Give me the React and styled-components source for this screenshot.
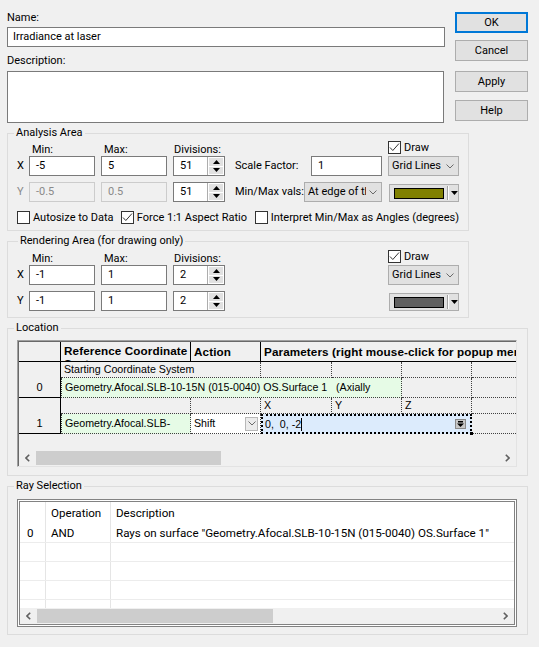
import React from "react";
import styled, { createGlobalStyle } from "styled-components";

const UI_FONT = `Roboto, "Open Sans", sans-serif`;
const GRID_FONT = `"Liberation Sans", Arial, sans-serif`;

const GlobalStyle = createGlobalStyle`
    html, body {
        margin: 0;
        padding: 0;
        background: #f0f0f0;
    }

    * {
        box-sizing: border-box;
    }
`;

const Dialog = styled.div`
    width: 539px;
    height: 647px;
    overflow: hidden;
    background: #f0f0f0;
    font-family: ${UI_FONT};
    font-size: 11px;
    line-height: 14px;
    color: #000;
    padding: 0 11px 0 7px;
`;

const TopSection = styled.div`
    display: flex;
    gap: 10px;
`;

const FormColumn = styled.div`
    width: 438px;
    display: flex;
    flex-direction: column;
`;

const FieldLabel = styled.div`
    height: 14px;
    margin-top: ${(p) => p.$mt}px;
`;

const NameBox = styled.div`
    margin-top: 2px;
    height: 20px;
    border: 1px solid #7a7a7a;
    background: #fff;
    padding: 0 5px;
    display: flex;
    align-items: center;
`;

const DescBox = styled.div`
    margin-top: 3px;
    width: 437px;
    height: 52px;
    border: 1px solid #7a7a7a;
    background: #fff;
`;

const ButtonColumn = styled.div`
    width: 73px;
    display: flex;
    flex-direction: column;
`;

const DialogButton = styled.div`
    margin-top: ${(p) => p.$mt}px;
    height: 21px;
    background: #e1e1e1;
    border: ${(p) => (p.$primary ? "2px solid #0078d7" : "1px solid #adadad")};
    display: flex;
    align-items: center;
    justify-content: center;
`;

const GroupBox = styled.div`
    position: relative;
    width: ${(p) => p.$w}px;
    margin-top: ${(p) => p.$mt}px;
    padding: ${(p) => p.$pad};
    border: 1px solid #dcdcdc;
`;

const GroupTitle = styled.div`
    position: absolute;
    top: -8px;
    left: ${(p) => p.$left}px;
    padding: 0 2px;
    line-height: 14px;
    background: #f0f0f0;
    white-space: nowrap;
`;

const ControlGrid = styled.div`
    display: grid;
    grid-template-columns: 15px 66px 66px 52px 67px 78px 71px;
    grid-template-rows: ${(p) => p.$rows};
    column-gap: 6px;
    align-items: start;
`;

const ColLabel = styled.div`
    line-height: 13px;
    padding-left: ${(p) => (p.$pl === undefined ? 3 : p.$pl)}px;
    white-space: nowrap;
`;

const AxisLabel = styled.div`
    height: 20px;
    padding-left: 9px;
    display: flex;
    align-items: center;
    color: ${(p) => (p.$disabled ? "#8a8a8a" : "#000")};
`;

const SideLabel = styled.div`
    height: 20px;
    padding-left: 4px;
    display: flex;
    align-items: center;
    white-space: nowrap;
`;

const EditBox = styled.div`
    height: 20px;
    width: ${(p) => (p.$w ? `${p.$w}px` : "auto")};
    margin-left: ${(p) => p.$ml || 0}px;
    border: 1px solid ${(p) => (p.$disabled ? "#cccccc" : "#7a7a7a")};
    background: ${(p) => (p.$disabled ? "#f0f0f0" : "#fff")};
    color: ${(p) => (p.$disabled ? "#8a8a8a" : "#000")};
    padding: 0 6px;
    display: flex;
    align-items: center;
`;

const SpinBox = styled.div`
    height: 20px;
    display: flex;
    border: 1px solid #7a7a7a;
    background: #fff;
`;

const SpinText = styled.div`
    flex: 1;
    padding-left: 6px;
    display: flex;
    align-items: center;
`;

const SpinButtons = styled.div`
    width: 17px;
    display: flex;
    flex-direction: column;
    gap: 1px;
    padding: 1px;
    border-left: 1px solid #adadad;
    background: #fff;
`;

const SpinHalf = styled.div`
    flex: 1;
    background: #e1e1e1;
    display: flex;
    align-items: center;
    justify-content: center;
`;

const ComboBox = styled.div`
    height: 20px;
    width: ${(p) => p.$w}px;
    display: flex;
    align-items: center;
    padding: 0 4px 0 3px;
    border: 1px solid #adadad;
    background: #e1e1e1;
`;

const ComboText = styled.div`
    flex: 1;
    overflow: hidden;
    white-space: nowrap;
    margin-right: 3px;
`;

const ColorCombo = styled.div`
    width: 70px;
    height: 18px;
    margin: 2px 0 0 1px;
    display: flex;
    align-items: center;
    padding-left: 4px;
    border: 1px solid #adadad;
    background: #e1e1e1;
`;

const Swatch = styled.div`
    width: 51px;
    height: 11px;
    border: 1px solid #000;
    background: ${(p) => p.$color};
`;

const SwatchDivider = styled.div`
    width: 2px;
    height: 14px;
    margin: 0 2px 0 3px;
    border-left: 1px solid #a0a0a0;
    border-right: 1px solid #fff;
`;

const CheckRow = styled.div`
    grid-column: 1 / -1;
    display: flex;
    padding-left: 9px;
`;

const CheckItem = styled.div`
    display: flex;
    align-items: center;
    gap: 3px;
    width: ${(p) => (p.$w ? `${p.$w}px` : "auto")};
    margin-top: ${(p) => p.$mt || 0}px;
    line-height: 13px;
    white-space: nowrap;
`;

const CheckBox = styled.div`
    width: 13px;
    height: 13px;
    border: 1px solid #333;
    background: #fff;
    display: flex;
    align-items: center;
    justify-content: center;
`;

/* location grid */

const DataGrid = styled.div`
    height: 127px;
    display: flex;
    flex-direction: column;
    overflow: hidden;
    padding: 1px 0 0 1px;
    border: 1px solid;
    border-color: #a0a0a0 #e3e3e3 #e3e3e3 #a0a0a0;
    box-shadow: inset 1px 1px 0 #696969;
    background: #f0f0f0;
    font-family: ${GRID_FONT};
    font-size: 10.67px;
    line-height: 13px;
`;

const GridHeader = styled.div`
    height: 20px;
    flex-shrink: 0;
    display: flex;
    border-bottom: 1px solid #000;
`;

const HeadCell = styled.div`
    width: ${(p) => (p.$w ? `${p.$w}px` : "auto")};
    flex: ${(p) => (p.$w ? "none" : 1)};
    border-right: ${(p) => (p.$w ? "1px solid #000" : "none")};
    padding: ${(p) => (p.$wrap ? "2px 2px 0 3px" : "0 2px 0 3px")};
    display: flex;
    align-items: ${(p) => (p.$wrap ? "flex-start" : "center")};
    white-space: ${(p) => (p.$wrap ? "normal" : "nowrap")};
    overflow: hidden;
    font-weight: bold;
    font-size: 11.7px;
    letter-spacing: 0.1px;
`;

const GridBody = styled.div`
    display: flex;
    flex-shrink: 0;
`;

const RowHeadCol = styled.div`
    width: 42px;
    flex-shrink: 0;
    border-right: 1px solid #000;
`;

const RowHead = styled.div`
    height: 36px;
    border-bottom: 1px solid #000;
    display: flex;
    align-items: flex-end;
    justify-content: center;
    padding-bottom: 3px;
    font-size: 11px;
`;

const CellArea = styled.div`
    flex: 1;
    min-width: 0;
    display: flex;
    flex-direction: column;
`;

const SubRow = styled.div`
    height: ${(p) => p.$h}px;
    display: flex;
`;

const Cell = styled.div`
    width: ${(p) => (p.$w ? `${p.$w}px` : "auto")};
    flex: ${(p) => (p.$w ? "none" : 1)};
    background: ${(p) => p.$bg || "transparent"};
    border-bottom: 1px dotted #404040;
    border-right: ${(p) => (p.$right ? "1px dotted #404040" : "none")};
    border-left: ${(p) => (p.$left ? "1px dotted #404040" : "none")};
    padding: 0 2px 0 3px;
    display: flex;
    align-items: center;
    white-space: pre;
    overflow: ${(p) => (p.$spill ? "visible" : "hidden")};
`;

const CellDrop = styled.div`
    width: 13px;
    height: 14px;
    margin-left: auto;
    border: 1px solid #b8b8b8;
    background: #ececec;
    display: flex;
    align-items: center;
    justify-content: center;
`;

const EditCell = styled.div`
    position: relative;
    width: 211px;
    flex: none;
    display: flex;
    align-items: center;
    padding: 0 2px 0 2px;
    border: 2px dotted #000;
    background: #dcebfc;
    white-space: pre;
`;

const Caret = styled.span`
    display: inline-block;
    width: 1px;
    height: 13px;
    background: #000;
`;

const CornerHandle = styled.div`
    position: absolute;
    right: -3px;
    bottom: -3px;
    width: 3px;
    height: 3px;
    background: #000;
`;

const HScroll = styled.div`
    height: 16px;
    flex-shrink: 0;
    margin-top: auto;
    display: flex;
    align-items: center;
    background: #f0f0f0;
`;

const ScrollArrow = styled.div`
    width: 17px;
    height: 16px;
    display: flex;
    align-items: center;
    justify-content: center;
`;

const ScrollThumb = styled.div`
    width: ${(p) => p.$w}px;
    height: 14px;
    background: #cdcdcd;
`;

const ScrollTrack = styled.div`
    flex: 1;
`;

/* ray list */

const ListView = styled.div`
    height: 128px;
    display: flex;
    flex-direction: column;
    padding: 2px;
    border: 1px solid #828282;
    box-shadow: inset 0 0 0 1px #fff, inset 0 0 0 2px #828282;
    background: #fff;
    font-size: 11.6px;
`;

const ListHeader = styled.div`
    height: 22px;
    flex-shrink: 0;
    display: flex;
`;

const ListBody = styled.div`
    flex: 1;
    overflow: hidden;
`;

const ListRow = styled.div`
    height: 19px;
    display: flex;
    border-bottom: 1px solid #ececec;
`;

const ListCell = styled.div`
    width: ${(p) => (p.$w ? `${p.$w}px` : "auto")};
    flex: ${(p) => (p.$w ? "none" : 1)};
    border-right: ${(p) => (p.$w ? "1px solid #e5e5e5" : "none")};
    padding-left: ${(p) => p.$pl}px;
    display: flex;
    align-items: center;
    white-space: nowrap;
    overflow: hidden;
`;

const Chevron = () => (
    <svg width="8" height="5" viewBox="0 0 8 5">
        <polyline points="0.5,0.5 4,4 7.5,0.5" fill="none" stroke="#6a6a6a" strokeWidth="1" />
    </svg>
);

const CheckMark = () => (
    <svg width="11" height="11" viewBox="0 0 11 11">
        <polyline points="1,5.5 3.8,8.5 10,1.5" fill="none" stroke="#333" strokeWidth="1" />
    </svg>
);

const Triangle = ({ up }) => (
    <svg width="7" height="4" viewBox="0 0 7 4">
        <polygon points={up ? "0,4 3.5,0 7,4" : "0,0 3.5,4 7,0"} fill="#000" />
    </svg>
);

const ArrowGlyph = ({ right }) => (
    <svg width="5" height="8" viewBox="0 0 5 8">
        <polyline
            points={right ? "0.8,0.8 4,4 0.8,7.2" : "4.2,0.8 1,4 4.2,7.2"}
            fill="none"
            stroke="#606060"
            strokeWidth="1.6"
        />
    </svg>
);

const DropIcon = () => (
    <svg width="11" height="10" viewBox="0 0 11 10" style={{ marginLeft: "auto", marginRight: 2 }}>
        <rect x="0.5" y="0.5" width="10" height="9" fill="#c8c8c8" stroke="#8a8a8a" />
        <rect x="3" y="2" width="5" height="1.5" fill="#000" />
        <polygon points="2,4.5 9,4.5 5.5,8" fill="#000" />
    </svg>
);

const Check = ({ checked, children, ...rest }) => (
    <CheckItem {...rest}>
        <CheckBox>{checked && <CheckMark />}</CheckBox>
        <span>{children}</span>
    </CheckItem>
);

const Spinner = ({ value }) => (
    <SpinBox>
        <SpinText>{value}</SpinText>
        <SpinButtons>
            <SpinHalf><Triangle up /></SpinHalf>
            <SpinHalf><Triangle /></SpinHalf>
        </SpinButtons>
    </SpinBox>
);

const Combo = ({ width, children }) => (
    <ComboBox $w={width}>
        <ComboText>{children}</ComboText>
        <Chevron />
    </ComboBox>
);

const ColorPicker = ({ color }) => (
    <ColorCombo>
        <Swatch $color={color} />
        <SwatchDivider />
        <Triangle />
    </ColorCombo>
);

const ScrollBar = ({ thumb }) => (
    <HScroll>
        <ScrollArrow><ArrowGlyph /></ScrollArrow>
        <ScrollThumb $w={thumb} />
        <ScrollTrack />
        <ScrollArrow><ArrowGlyph right /></ScrollArrow>
    </HScroll>
);

export default function App() {
    return (
        <>
            <GlobalStyle />
            <Dialog>
                <TopSection>
                    <FormColumn>
                        <FieldLabel $mt={11}>Name:</FieldLabel>
                        <NameBox>Irradiance at laser</NameBox>
                        <FieldLabel $mt={7}>Description:</FieldLabel>
                        <DescBox />
                    </FormColumn>
                    <ButtonColumn>
                        <DialogButton $primary $mt={12}>OK</DialogButton>
                        <DialogButton $mt={7}>Cancel</DialogButton>
                        <DialogButton $mt={10}>Apply</DialogButton>
                        <DialogButton $mt={8}>Help</DialogButton>
                    </ButtonColumn>
                </TopSection>

                <GroupBox $w={462} $mt={10} $pad="9px 0 6px 0">
                    <GroupTitle $left={6}>Analysis Area</GroupTitle>
                    <ControlGrid $rows="13px 26px 29px 13px">
                        <span />
                        <ColLabel>Min:</ColLabel>
                        <ColLabel>Max:</ColLabel>
                        <ColLabel $pl={1}>Divisions:</ColLabel>
                        <span />
                        <span />
                        <Check checked $mt={-2}>Draw</Check>

                        <AxisLabel>X</AxisLabel>
                        <EditBox>-5</EditBox>
                        <EditBox>5</EditBox>
                        <Spinner value="51" />
                        <SideLabel>Scale Factor:</SideLabel>
                        <EditBox $w={71} $ml={7}>1</EditBox>
                        <Combo width={71}>Grid Lines</Combo>

                        <AxisLabel $disabled>Y</AxisLabel>
                        <EditBox $disabled>-0.5</EditBox>
                        <EditBox $disabled>0.5</EditBox>
                        <Spinner value="51" />
                        <SideLabel>Min/Max vals:</SideLabel>
                        <Combo width={78}>At edge of the data</Combo>
                        <ColorPicker color="#808000" />

                        <CheckRow>
                            <Check $w={107}>Autosize to Data</Check>
                            <Check $w={138} checked>Force 1:1 Aspect Ratio</Check>
                            <Check>Interpret Min/Max as Angles (degrees)</Check>
                        </CheckRow>
                    </ControlGrid>
                </GroupBox>

                <GroupBox $w={462} $mt={10} $pad="10px 0 6px 0">
                    <GroupTitle $left={10}>Rendering Area (for drawing only)</GroupTitle>
                    <ControlGrid $rows="13px 26px 20px">
                        <span />
                        <ColLabel>Min:</ColLabel>
                        <ColLabel>Max:</ColLabel>
                        <ColLabel $pl={1}>Divisions:</ColLabel>
                        <span />
                        <span />
                        <Check checked $mt={-2}>Draw</Check>

                        <AxisLabel>X</AxisLabel>
                        <EditBox>-1</EditBox>
                        <EditBox>1</EditBox>
                        <Spinner value="2" />
                        <span />
                        <span />
                        <Combo width={71}>Grid Lines</Combo>

                        <AxisLabel>Y</AxisLabel>
                        <EditBox>-1</EditBox>
                        <EditBox>1</EditBox>
                        <Spinner value="2" />
                        <span />
                        <span />
                        <ColorPicker color="#606060" />
                    </ControlGrid>
                </GroupBox>

                <GroupBox $w={521} $mt={10} $pad="11px 10px 8px 9px">
                    <GroupTitle $left={6}>Location</GroupTitle>
                    <DataGrid>
                        <GridHeader>
                            <HeadCell $w={42} />
                            <HeadCell $w={130} $wrap>Reference Coordinate System</HeadCell>
                            <HeadCell $w={70}>Action</HeadCell>
                            <HeadCell>Parameters (right mouse-click for popup menu)</HeadCell>
                        </GridHeader>
                        <GridBody>
                            <RowHeadCol>
                                <RowHead>0</RowHead>
                                <RowHead>1</RowHead>
                            </RowHeadCol>
                            <CellArea>
                                <SubRow $h={16}>
                                    <Cell $w={130} $spill>Starting Coordinate System</Cell>
                                    <Cell $w={70} $right />
                                    <Cell $w={71} $right />
                                    <Cell $w={70} $right />
                                    <Cell $w={70} $right />
                                    <Cell />
                                </SubRow>
                                <SubRow $h={20}>
                                    <Cell $w={341} $left $right $bg="#e6fbe6">
                                        {"Geometry.Afocal.SLB-10-15N (015-0040) OS.Surface 1   (Axially"}
                                    </Cell>
                                    <Cell $w={70} $right />
                                    <Cell />
                                </SubRow>
                                <SubRow $h={16}>
                                    <Cell $w={130} $right />
                                    <Cell $w={70} $right />
                                    <Cell $w={71} $right>X</Cell>
                                    <Cell $w={70} $right>Y</Cell>
                                    <Cell $w={70} $right>Z</Cell>
                                    <Cell />
                                </SubRow>
                                <SubRow $h={20}>
                                    <Cell $w={130} $left $right $bg="#e6fbe6">Geometry.Afocal.SLB-</Cell>
                                    <Cell $w={70} $right $bg="#fff">
                                        Shift
                                        <CellDrop><Chevron /></CellDrop>
                                    </Cell>
                                    <EditCell>
                                        {"0,  0, -2"}
                                        <Caret />
                                        <DropIcon />
                                        <CornerHandle />
                                    </EditCell>
                                    <Cell />
                                </SubRow>
                            </CellArea>
                        </GridBody>
                        <ScrollBar thumb={185} />
                    </DataGrid>
                </GroupBox>

                <GroupBox $w={521} $mt={10} $pad="12px 10px 7px 9px">
                    <GroupTitle $left={6}>Ray Selection</GroupTitle>
                    <ListView>
                        <ListHeader>
                            <ListCell $w={26} $pl={7} />
                            <ListCell $w={65} $pl={5}>Operation</ListCell>
                            <ListCell $pl={5}>Description</ListCell>
                        </ListHeader>
                        <ListBody>
                            <ListRow>
                                <ListCell $w={26} $pl={7}>0</ListCell>
                                <ListCell $w={65} $pl={5}>AND</ListCell>
                                <ListCell $pl={5}>
                                    Rays on surface "Geometry.Afocal.SLB-10-15N (015-0040) OS.Surface 1"
                                </ListCell>
                            </ListRow>
                            {[1, 2, 3, 4].map((i) => (
                                <ListRow key={i}>
                                    <ListCell $w={26} $pl={7} />
                                    <ListCell $w={65} $pl={5} />
                                    <ListCell $pl={5} />
                                </ListRow>
                            ))}
                        </ListBody>
                        <ScrollBar thumb={236} />
                    </ListView>
                </GroupBox>
            </Dialog>
        </>
    );
}
